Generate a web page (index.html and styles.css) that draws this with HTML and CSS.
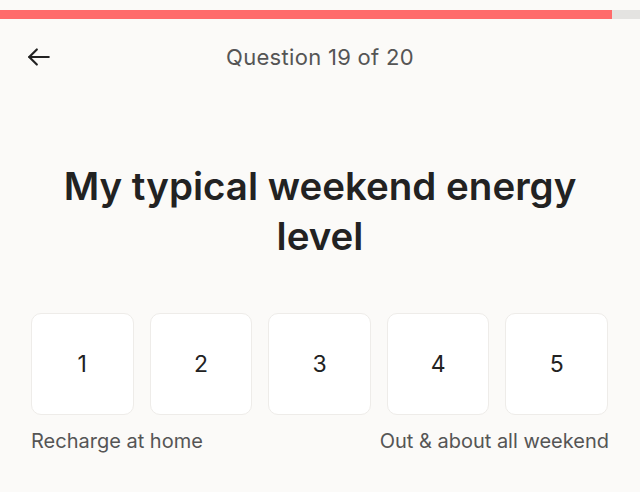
FILE: index.html
```html
<!DOCTYPE html>
<html lang="en">
<head>
    <meta charset="UTF-8">
    <meta name="viewport" content="width=device-width, initial-scale=1.0">
    <title>Question 19 of 20</title>
    <link rel="stylesheet" href="styles.css">
</head>
<body>
    <div class="progress">
        <div class="progress-fill"></div>
    </div>
    <div class="topbar">
        <button class="back-btn" aria-label="Back">
            <svg width="26" height="26" viewBox="0 0 24 24" fill="none" stroke="#222" stroke-width="2" stroke-linecap="round" stroke-linejoin="round">
                <path d="M21 12H3"/>
                <path d="M10 5l-7 7 7 7"/>
            </svg>
        </button>
        <div class="counter">Question 19 of 20</div>
    </div>
    <h1 class="question">My typical weekend energy level</h1>
    <div class="scale">
        <button class="option">1</button>
        <button class="option">2</button>
        <button class="option">3</button>
        <button class="option">4</button>
        <button class="option">5</button>
    </div>
    <div class="labels">
        <span>Recharge at home</span>
        <span>Out &amp; about all weekend</span>
    </div>
</body>
</html>
```

FILE: styles.css
```css
body {
    margin: 0;
    background-color: #fbfaf8;
    font-family: 'Inter', 'Liberation Sans', sans-serif;
    color: #222;
}

.progress {
    margin-top: 10px;
    height: 9px;
    background: #e4e3e1;
}

.progress-fill {
    width: 612px;
    height: 100%;
    background: #ff6b6b;
}

.topbar {
    position: relative;
    display: flex;
    align-items: center;
    justify-content: center;
    height: 58px;
    margin-top: 9px;
}

.back-btn {
    position: absolute;
    left: 26px;
    top: 16px;
    padding: 0;
    border: none;
    background: none;
    cursor: pointer;
    display: flex;
}

.counter {
    font-size: 22px;
    letter-spacing: 0.3px;
    color: #555;
}

.question {
    margin: 75px 36px 0;
    text-align: center;
    font-size: 38.5px;
    font-weight: 600;
    line-height: 50px;
    color: #222;
}

.scale {
    display: grid;
    grid-template-columns: repeat(5, 1fr);
    gap: 16px;
    margin: 52px 32px 0 31px;
}

.option {
    height: 102px;
    border: 1px solid #eeece9;
    border-radius: 10px;
    background: #fff;
    font-family: inherit;
    font-size: 23px;
    color: #222;
    cursor: pointer;
}

.labels {
    display: flex;
    justify-content: space-between;
    margin: 14px 31px 0;
    font-size: 20px;
    color: #555;
}
```
